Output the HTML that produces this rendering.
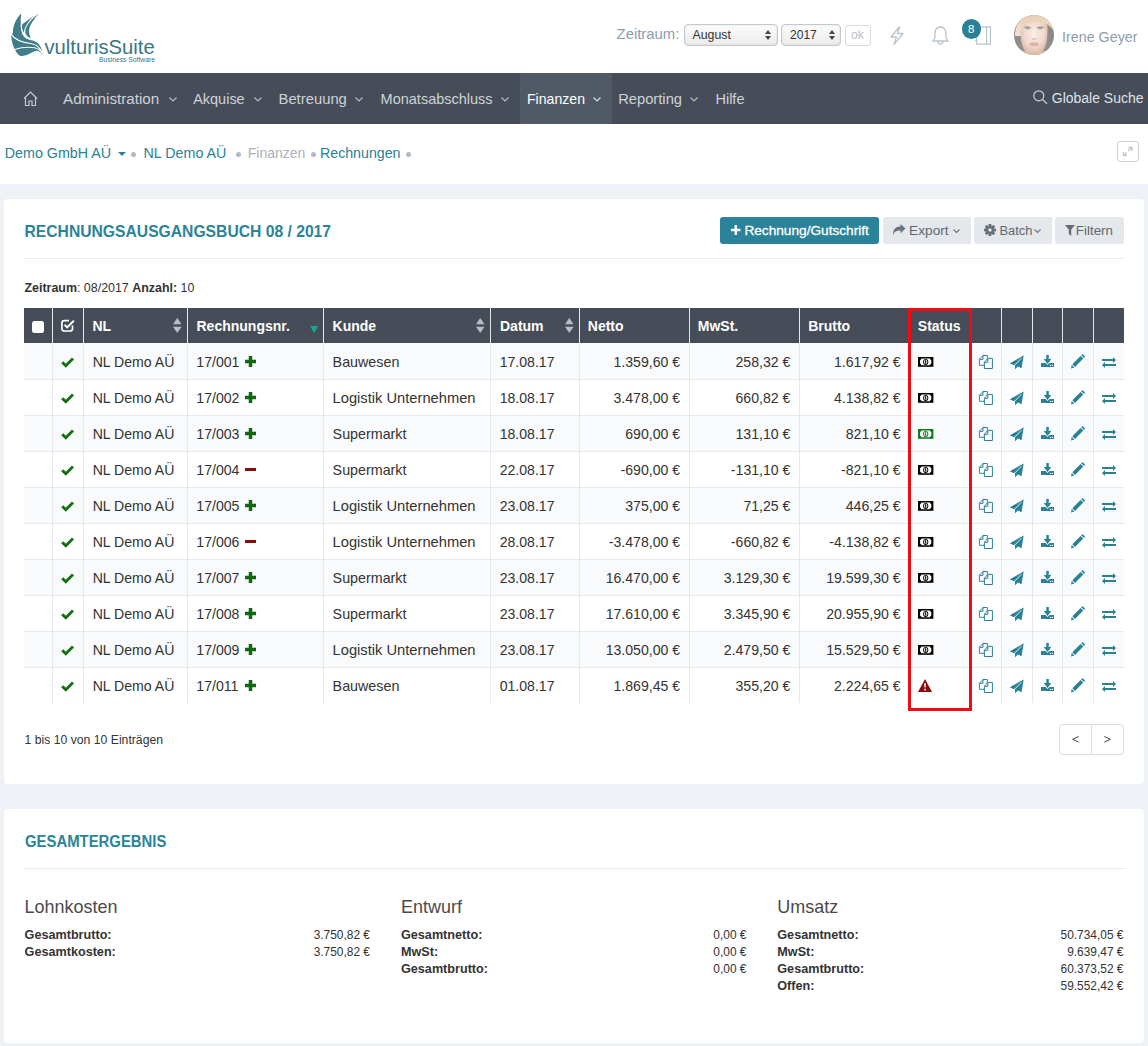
<!DOCTYPE html><html><head><meta charset="utf-8"><style>
*{box-sizing:border-box;margin:0;padding:0}
html,body{width:1148px;height:1046px;overflow:hidden}
body{background:#eef2f6;font-family:"Liberation Sans",sans-serif;position:relative;color:#333}
.t{position:absolute;white-space:nowrap}
.abs{position:absolute}
svg{position:absolute;overflow:visible}
</style></head><body>
<div class="abs" style="left:0px;top:0px;width:1148px;height:73px;background:#fff"></div>
<div class="abs" style="left:0px;top:124px;width:1148px;height:60px;background:#fff"></div>
<div class="abs" style="left:0px;top:73px;width:1148px;height:51px;background:#464d58"></div>
<div class="abs" style="left:520px;top:73px;width:92px;height:51px;background:#505a66"></div>
<svg style="left:8px;top:10px;" width="40" height="50" viewBox="0 0 837 1046">
<path fill="#417c89" d="M280,70 C170,170 95,350 105,480 L65,510 C70,700 150,900 260,960 C400,970 520,860 600,850 C660,860 700,900 720,930 C720,800 650,680 520,640 C420,620 300,600 280,420 C265,300 260,150 280,70 Z"/>
<path fill="#417c89" d="M645,68 C520,170 380,300 362,430 C352,520 420,590 495,608 C440,540 425,440 462,340 C505,235 590,140 645,68 Z"/>
<path fill="#417c89" d="M545,122 C450,190 335,265 285,320 C292,400 305,450 330,485 C335,380 410,250 545,122 Z"/>
<path fill="none" stroke="#fff" stroke-width="24" d="M65,505 C150,640 300,680 480,700 C600,720 680,800 715,900"/>
<path fill="none" stroke="#fff" stroke-width="22" d="M125,830 C250,790 420,770 560,790 C640,810 690,860 705,900"/>
<path fill="none" stroke="#fff" stroke-width="22" d="M270,320 C280,450 330,560 500,605"/>
</svg>
<div class="t" style="left:44.40px;top:36px;font-size:20.25px;line-height:22px;color:#3a7583;font-weight:normal;">vulturisSuite</div>
<div class="t" style="left:99.00px;top:56px;font-size:6.76px;line-height:7px;color:#3a7583;font-weight:normal;">Business Software</div>
<div class="t" style="left:616.60px;top:26px;font-size:14.87px;line-height:16px;color:#8d9cae;font-weight:normal;">Zeitraum:</div>
<div class="abs" style="left:684px;top:24px;width:94px;height:22px;border:1px solid #c4c7cb;border-radius:4px;background:linear-gradient(#fcfcfc,#ebebeb);box-shadow:inset 0 0 2px rgba(0,0,0,.12)"></div>
<div class="abs" style="left:781px;top:24px;width:60px;height:22px;border:1px solid #c4c7cb;border-radius:4px;background:linear-gradient(#fcfcfc,#ebebeb);box-shadow:inset 0 0 2px rgba(0,0,0,.12)"></div>
<div class="t" style="left:692.50px;top:28px;font-size:12.33px;line-height:14px;color:#333;font-weight:normal;">August</div>
<div class="t" style="left:790.10px;top:28px;font-size:12.00px;line-height:14px;color:#333;font-weight:normal;">2017</div>
<svg style="left:765px;top:29.5px;" width="6" height="10" viewBox="0 0 6 10"><path fill="#444" d="M0,4 L3,0 L6,4 Z M0,6 L3,10 L6,6 Z"/></svg>
<svg style="left:828.5px;top:29.5px;" width="6" height="10" viewBox="0 0 6 10"><path fill="#444" d="M0,4 L3,0 L6,4 Z M0,6 L3,10 L6,6 Z"/></svg>
<div class="abs" style="left:845px;top:25px;width:26px;height:21px;border:1px solid #d3dbe0;border-radius:3px;background:#fff"></div>
<div class="t" style="left:851.00px;top:28px;font-size:12.12px;line-height:14px;color:#b5c1c9;font-weight:normal;">ok</div>
<svg style="left:890px;top:26px;" width="14" height="19" viewBox="0 0 14 19"><path fill="none" stroke="#b9c3cc" stroke-width="1.3" stroke-linejoin="round" d="M9.5,0.7 L1,11 L6.5,11 L4,18.3 L13,7.5 L7.5,7.5 Z"/></svg>
<svg style="left:932px;top:26px;" width="17" height="19" viewBox="0 0 17 19"><path fill="none" stroke="#b9c3cc" stroke-width="1.3" d="M8.5,1 C4.5,1 3,4 3,8 L3,12 L1,15 L16,15 L14,12 L14,8 C14,4 12.5,1 8.5,1 Z M6,15.5 C6.3,17.5 7.3,18.2 8.5,18.2 C9.7,18.2 10.7,17.5 11,15.5"/></svg>
<svg style="left:975px;top:26px;" width="17" height="19" viewBox="0 0 17 19"><path fill="none" stroke="#b9c3cc" stroke-width="1.2" d="M1.6,0.8 L15.4,0.8 L15.4,18.2 L1.6,18.2 Z M11.6,0.8 L11.6,18.2 M0,14.5 L1.6,14.5"/></svg>
<div class="abs" style="left:961.7px;top:19.2px;width:19.4px;height:19.4px;background:#2a8196;border-radius:50%"></div>
<div class="t" style="left:967.60px;top:23px;font-size:11.50px;line-height:12px;color:#fff;font-weight:normal;width:7px;text-align:center">8</div>
<svg style="left:1014px;top:15px;" width="40" height="40" viewBox="0 0 40 40">
<defs><clipPath id="av"><circle cx="20" cy="20" r="20"/></clipPath>
<radialGradient id="sk" cx="0.5" cy="0.4" r="0.62"><stop offset="0" stop-color="#f9ebe3"/><stop offset="0.55" stop-color="#f2dbcf"/><stop offset="1" stop-color="#d9b7a3"/></radialGradient>
<linearGradient id="bgv" x1="0" x2="1"><stop offset="0" stop-color="#8a8986"/><stop offset="0.5" stop-color="#a4a29e"/><stop offset="1" stop-color="#868582"/></linearGradient>
<linearGradient id="hr" x1="0" y1="0" x2="0" y2="1"><stop offset="0" stop-color="#e6cfb2"/><stop offset="1" stop-color="#f3e4d2"/></linearGradient></defs>
<g clip-path="url(#av)">
<rect x="0" y="0" width="40" height="40" fill="url(#bgv)"/>
<path d="M7,5 C5.5,24 8,33 13,38 C16,40.5 24,40.5 27,38 C32,33 34.5,24 33,5 Z" fill="url(#sk)"/>
<path d="M0,40 L0,36 C4,36 9,35 13,37 L27,37 C31,35 36,36 40,36 L40,40 Z" fill="#dcbca8"/>
<path d="M1,21 C1,6 10,0 21,0 C32,0 39,6 39,15 C36,10 31,7 24,7.2 C17,7.4 11,8.5 8.5,11 C7,13 6.5,17 6.8,21 Z" fill="url(#hr)"/>
<path d="M10.5,12.6 Q13.6,11 16.8,12.8" fill="none" stroke="#7d6d66" stroke-width="0.9"/>
<path d="M23.2,12.8 Q26.4,11 29.5,12.6" fill="none" stroke="#7d6d66" stroke-width="0.9"/>
<ellipse cx="13.7" cy="13.4" rx="1.9" ry="0.9" fill="#8ea1ae"/>
<ellipse cx="26.3" cy="13.4" rx="1.9" ry="0.9" fill="#8ea1ae"/>
<path d="M19.2,14 L18.3,22.5 Q20,24.5 21.7,22.5 L20.8,14 Z" fill="#fbf1ec" opacity="0.8"/>
<path d="M17.8,23.6 Q20,25 22.2,23.6" fill="none" stroke="#caa090" stroke-width="0.8"/>
<ellipse cx="20" cy="29.2" rx="4.6" ry="1.9" fill="#dfaea5"/>
</g></svg>
<div class="t" style="left:1062.00px;top:29px;font-size:14.30px;line-height:16px;color:#8d9cae;font-weight:normal;">Irene Geyer</div>
<svg style="left:23px;top:91px;" width="15" height="16" viewBox="0 0 15 16"><path fill="none" stroke="#c4c9d0" stroke-width="1.2" d="M1,7.5 L7.5,1 L14,7.5 M2.5,6.5 L2.5,14.5 L6,14.5 L6,10 L9,10 L9,14.5 L12.5,14.5 L12.5,6.5"/></svg>
<div class="t" style="left:63.00px;top:90px;font-size:15.20px;line-height:17px;color:#cdd2d9;font-weight:normal;">Administration</div>
<svg style="left:169px;top:96.5px;" width="8" height="5" viewBox="0 0 8 5"><path fill="none" stroke="#b5bcc5" stroke-width="1.1" d="M0.5,0.5 L4,4 L7.5,0.5"/></svg>
<div class="t" style="left:193.20px;top:91px;font-size:14.48px;line-height:16px;color:#cdd2d9;font-weight:normal;">Akquise</div>
<svg style="left:253.8px;top:96.5px;" width="8" height="5" viewBox="0 0 8 5"><path fill="none" stroke="#b5bcc5" stroke-width="1.1" d="M0.5,0.5 L4,4 L7.5,0.5"/></svg>
<div class="t" style="left:278.50px;top:91px;font-size:14.82px;line-height:16px;color:#cdd2d9;font-weight:normal;">Betreuung</div>
<svg style="left:355.4px;top:96.5px;" width="8" height="5" viewBox="0 0 8 5"><path fill="none" stroke="#b5bcc5" stroke-width="1.1" d="M0.5,0.5 L4,4 L7.5,0.5"/></svg>
<div class="t" style="left:380.60px;top:91px;font-size:14.50px;line-height:16px;color:#cdd2d9;font-weight:normal;">Monatsabschluss</div>
<svg style="left:501.3px;top:96.5px;" width="8" height="5" viewBox="0 0 8 5"><path fill="none" stroke="#b5bcc5" stroke-width="1.1" d="M0.5,0.5 L4,4 L7.5,0.5"/></svg>
<div class="t" style="left:527.00px;top:91px;font-size:14.10px;line-height:16px;color:#ffffff;font-weight:normal;">Finanzen</div>
<svg style="left:593.2px;top:96.5px;" width="8" height="5" viewBox="0 0 8 5"><path fill="none" stroke="#dde1e6" stroke-width="1.1" d="M0.5,0.5 L4,4 L7.5,0.5"/></svg>
<div class="t" style="left:618.20px;top:91px;font-size:14.72px;line-height:16px;color:#cdd2d9;font-weight:normal;">Reporting</div>
<svg style="left:690.3px;top:96.5px;" width="8" height="5" viewBox="0 0 8 5"><path fill="none" stroke="#b5bcc5" stroke-width="1.1" d="M0.5,0.5 L4,4 L7.5,0.5"/></svg>
<div class="t" style="left:715.40px;top:91px;font-size:14.55px;line-height:16px;color:#cdd2d9;font-weight:normal;">Hilfe</div>
<svg style="left:1033px;top:90px;" width="15" height="14" viewBox="0 0 15 14"><circle cx="5.8" cy="5.8" r="5" fill="none" stroke="#c9ced5" stroke-width="1.2"/><path d="M9.5,9.5 L14,13.8" stroke="#c9ced5" stroke-width="1.3"/></svg>
<div class="t" style="left:1051.80px;top:90px;font-size:13.98px;line-height:16px;color:#dfe3e8;font-weight:normal;">Globale Suche</div>
<div class="t" style="left:4.80px;top:145px;font-size:14.29px;line-height:16px;color:#2a8196;font-weight:normal;">Demo GmbH AÜ</div>
<svg style="left:118px;top:152px;" width="8" height="4" viewBox="0 0 8 4"><path fill="#2a8196" d="M0,0 L8,0 L4,4 Z"/></svg>
<div class="abs" style="left:130.5px;top:152px;width:5px;height:5px;background:#b3bac4;border-radius:50%"></div>
<div class="abs" style="left:235.5px;top:152px;width:5px;height:5px;background:#b3bac4;border-radius:50%"></div>
<div class="abs" style="left:311.0px;top:152px;width:5px;height:5px;background:#b3bac4;border-radius:50%"></div>
<div class="abs" style="left:406.0px;top:152px;width:5px;height:5px;background:#b3bac4;border-radius:50%"></div>
<div class="t" style="left:143.50px;top:145px;font-size:14.30px;line-height:16px;color:#2a8196;font-weight:normal;">NL Demo AÜ</div>
<div class="t" style="left:247.80px;top:145px;font-size:14.00px;line-height:16px;color:#a9b1bc;font-weight:normal;">Finanzen</div>
<div class="t" style="left:320.00px;top:145px;font-size:14.20px;line-height:16px;color:#2a8196;font-weight:normal;">Rechnungen</div>
<div class="abs" style="left:1117px;top:141px;width:22px;height:21px;border:1px solid #cad2d7;border-radius:3px;background:#fff"></div>
<svg style="left:1122px;top:146px;" width="12" height="11" viewBox="0 0 12 11"><path fill="none" stroke="#bdc7cd" stroke-width="1.3" d="M1.5,9.5 L4.5,6.5 M6,5 L9.5,1.5 M1.5,6 L1.5,9.5 L5,9.5 M6.5,1.5 L10,1.5 L10,5"/></svg>
<div class="abs" style="left:4px;top:199px;width:1140px;height:585px;background:#fff;border-radius:4px"></div>
<div class="abs" style="left:4px;top:809px;width:1140px;height:234px;background:#fff;border-radius:4px"></div>
<div class="t" style="left:24.50px;top:223px;font-size:15.68px;line-height:17px;color:#2a849a;font-weight:bold;">RECHNUNGSAUSGANGSBUCH 08 / 2017</div>
<div class="abs" style="left:24px;top:258px;width:1100px;height:1px;background:#e9ecef"></div>
<div class="abs" style="left:720px;top:217px;width:159px;height:27px;background:#2a8399;border-radius:3px"></div>
<svg style="left:730.5px;top:225px;" width="9.5" height="10" viewBox="0 0 9.5 10"><path fill="#fff" d="M3.6,0 L5.9,0 L5.9,3.8 L9.5,3.8 L9.5,6.2 L5.9,6.2 L5.9,10 L3.6,10 L3.6,6.2 L0,6.2 L0,3.8 L3.6,3.8 Z"/></svg>
<div class="t" style="left:744.40px;top:223px;font-size:13.67px;line-height:15px;color:#fff;font-weight:normal;-webkit-text-stroke:0.3px #fff">Rechnung/Gutschrift</div>
<div class="abs" style="left:883px;top:217px;width:88px;height:27px;background:#e4e7eb;border-radius:3px 0 0 3px"></div>
<div class="abs" style="left:974px;top:217px;width:78px;height:27px;background:#e4e7eb;border-radius:3px 0 0 3px"></div>
<div class="abs" style="left:1055px;top:217px;width:69px;height:27px;background:#e4e7eb;border-radius:3px"></div>
<svg style="left:893px;top:223.5px;" width="12.5" height="12" viewBox="0 0 12.5 12"><path fill="#6b737c" d="M12.5,4.6 L7.6,0 L7.6,2.6 C3,2.6 0,5 0,11 C1.3,7.5 3.5,6.4 7.6,6.4 L7.6,9.2 Z"/></svg>
<div class="t" style="left:909.10px;top:223px;font-size:13.70px;line-height:15px;color:#5f6771;font-weight:normal;">Export</div>
<svg style="left:952.8px;top:228.5px;" width="7" height="4" viewBox="0 0 7 4"><path fill="none" stroke="#6b737c" stroke-width="1.1" d="M0.5,0.5 L3.5,3.5 L6.5,0.5"/></svg>
<svg style="left:984px;top:224px;" width="12" height="12" viewBox="0 0 12 12"><g fill="#656d76"><circle cx="6" cy="6" r="3.8"/><rect x="4.6" y="0" width="2.8" height="12" rx="0.6" transform="rotate(0 6 6)"/><rect x="4.6" y="0" width="2.8" height="12" rx="0.6" transform="rotate(45 6 6)"/><rect x="4.6" y="0" width="2.8" height="12" rx="0.6" transform="rotate(90 6 6)"/><rect x="4.6" y="0" width="2.8" height="12" rx="0.6" transform="rotate(135 6 6)"/></g><circle cx="6" cy="6" r="1.7" fill="#e4e7eb"/></svg>
<div class="t" style="left:999.40px;top:223px;font-size:12.91px;line-height:15px;color:#5f6771;font-weight:normal;">Batch</div>
<svg style="left:1033.5px;top:228.5px;" width="7" height="4" viewBox="0 0 7 4"><path fill="none" stroke="#6b737c" stroke-width="1.1" d="M0.5,0.5 L3.5,3.5 L6.5,0.5"/></svg>
<svg style="left:1065px;top:225px;" width="10" height="11" viewBox="0 0 10 11"><path fill="#656d76" d="M0,0 L10,0 L6.2,4.6 L6.2,11 L3.8,9 L3.8,4.6 Z"/></svg>
<div class="t" style="left:1075.80px;top:223px;font-size:13.39px;line-height:15px;color:#5f6771;font-weight:normal;">Filtern</div>
<div class="t" style="left:24.5px;top:279.59px;font-size:12.43px;line-height:16px;color:#333"><b>Zeitraum</b>: 08/2017 <b>Anzahl:</b> 10</div>
<div class="abs" style="left:24px;top:308px;width:1100px;height:35px;background:#464d58"></div>
<div class="abs" style="left:24px;top:343px;width:1100px;height:36px;background:#f9fafc"></div>
<div class="abs" style="left:24px;top:379px;width:1100px;height:1px;background:#e5e9ed"></div>
<div class="abs" style="left:24px;top:380px;width:1100px;height:35px;background:#ffffff"></div>
<div class="abs" style="left:24px;top:415px;width:1100px;height:1px;background:#e5e9ed"></div>
<div class="abs" style="left:24px;top:416px;width:1100px;height:35px;background:#f9fafc"></div>
<div class="abs" style="left:24px;top:451px;width:1100px;height:1px;background:#e5e9ed"></div>
<div class="abs" style="left:24px;top:452px;width:1100px;height:35px;background:#ffffff"></div>
<div class="abs" style="left:24px;top:487px;width:1100px;height:1px;background:#e5e9ed"></div>
<div class="abs" style="left:24px;top:488px;width:1100px;height:35px;background:#f9fafc"></div>
<div class="abs" style="left:24px;top:523px;width:1100px;height:1px;background:#e5e9ed"></div>
<div class="abs" style="left:24px;top:524px;width:1100px;height:35px;background:#ffffff"></div>
<div class="abs" style="left:24px;top:559px;width:1100px;height:1px;background:#e5e9ed"></div>
<div class="abs" style="left:24px;top:560px;width:1100px;height:35px;background:#f9fafc"></div>
<div class="abs" style="left:24px;top:595px;width:1100px;height:1px;background:#e5e9ed"></div>
<div class="abs" style="left:24px;top:596px;width:1100px;height:35px;background:#ffffff"></div>
<div class="abs" style="left:24px;top:631px;width:1100px;height:1px;background:#e5e9ed"></div>
<div class="abs" style="left:24px;top:632px;width:1100px;height:35px;background:#f9fafc"></div>
<div class="abs" style="left:24px;top:667px;width:1100px;height:1px;background:#e5e9ed"></div>
<div class="abs" style="left:24px;top:668px;width:1100px;height:35px;background:#ffffff"></div>
<div class="abs" style="left:52px;top:308px;width:1px;height:395px;background:#e5e9ed"></div>
<div class="abs" style="left:83px;top:308px;width:1px;height:395px;background:#e5e9ed"></div>
<div class="abs" style="left:187px;top:308px;width:1px;height:395px;background:#e5e9ed"></div>
<div class="abs" style="left:323px;top:308px;width:1px;height:395px;background:#e5e9ed"></div>
<div class="abs" style="left:490px;top:308px;width:1px;height:395px;background:#e5e9ed"></div>
<div class="abs" style="left:579px;top:308px;width:1px;height:395px;background:#e5e9ed"></div>
<div class="abs" style="left:689px;top:308px;width:1px;height:395px;background:#e5e9ed"></div>
<div class="abs" style="left:799px;top:308px;width:1px;height:395px;background:#e5e9ed"></div>
<div class="abs" style="left:908px;top:308px;width:1px;height:395px;background:#e5e9ed"></div>
<div class="abs" style="left:971px;top:308px;width:1px;height:395px;background:#e5e9ed"></div>
<div class="abs" style="left:1001px;top:308px;width:1px;height:395px;background:#e5e9ed"></div>
<div class="abs" style="left:1032px;top:308px;width:1px;height:395px;background:#e5e9ed"></div>
<div class="abs" style="left:1062px;top:308px;width:1px;height:395px;background:#e5e9ed"></div>
<div class="abs" style="left:1093px;top:308px;width:1px;height:395px;background:#e5e9ed"></div>
<div class="abs" style="left:32px;top:321px;width:12px;height:11.5px;background:#fff;border-radius:2.5px"></div>
<svg style="left:61px;top:319px;" width="14" height="13" viewBox="0 0 14 13"><path fill="none" stroke="#fff" stroke-width="1.7" d="M11.5,6.5 L11.5,9.5 C11.5,11 10.5,12 9,12 L3.3,12 C1.8,12 0.9,11 0.9,9.5 L0.9,4 C0.9,2.5 1.8,1.6 3.3,1.6 L8,1.6"/><path fill="none" stroke="#fff" stroke-width="2" d="M3.6,5.8 L6.2,8.4 L12.8,1.8"/></svg>
<div class="t" style="left:92.40px;top:318px;font-size:14.00px;line-height:16px;color:#ffffff;font-weight:bold;">NL</div>
<div class="t" style="left:196.50px;top:318px;font-size:14.00px;line-height:16px;color:#ffffff;font-weight:bold;">Rechnungsnr.</div>
<div class="t" style="left:332.60px;top:318px;font-size:14.00px;line-height:16px;color:#ffffff;font-weight:bold;">Kunde</div>
<div class="t" style="left:500.00px;top:318px;font-size:14.00px;line-height:16px;color:#ffffff;font-weight:bold;">Datum</div>
<div class="t" style="left:587.80px;top:318px;font-size:14.00px;line-height:16px;color:#ffffff;font-weight:bold;">Netto</div>
<div class="t" style="left:697.80px;top:318px;font-size:14.00px;line-height:16px;color:#ffffff;font-weight:bold;">MwSt.</div>
<div class="t" style="left:808.20px;top:318px;font-size:14.00px;line-height:16px;color:#ffffff;font-weight:bold;">Brutto</div>
<div class="t" style="left:917.80px;top:318px;font-size:14.00px;line-height:16px;color:#ffffff;font-weight:bold;">Status</div>
<svg style="left:173.2px;top:318px;" width="8.5" height="15" viewBox="0 0 8.5 15"><path fill="#b9bec5" d="M4.25,0 L8.5,6.2 L0,6.2 Z M0,8.8 L8.5,8.8 L4.25,15 Z"/></svg>
<svg style="left:476.2px;top:318.2px;" width="8.5" height="15" viewBox="0 0 8.5 15"><path fill="#b9bec5" d="M4.25,0 L8.5,6.2 L0,6.2 Z M0,8.8 L8.5,8.8 L4.25,15 Z"/></svg>
<svg style="left:565.4px;top:318px;" width="8.5" height="15" viewBox="0 0 8.5 15"><path fill="#b9bec5" d="M4.25,0 L8.5,6.2 L0,6.2 Z M0,8.8 L8.5,8.8 L4.25,15 Z"/></svg>
<svg style="left:309.7px;top:326px;" width="8.2" height="7" viewBox="0 0 8.2 7"><path fill="#1aa39a" d="M0,0 L8.2,0 L4.1,7 Z"/></svg>
<svg style="left:61px;top:357.7px;" width="13" height="9.5" viewBox="0 0 13 9.5"><path fill="#127012" d="M0,5 L2,3 L4.6,5.6 L10.8,-0.6 L12.8,1.4 L4.6,9.6 Z" transform="translate(0.2,0.2)"/></svg>
<div class="t" style="left:92.70px;top:354px;font-size:14.10px;line-height:16px;color:#333333;font-weight:normal;">NL Demo AÜ</div>
<div class="t" style="left:196.30px;top:354px;font-size:14.10px;line-height:16px;color:#333333;font-weight:normal;">17/001</div>
<svg style="left:244.8px;top:356px;" width="11" height="11" viewBox="0 0 11 11"><path fill="#0f6a0f" d="M3.75,0 L7.25,0 L7.25,3.75 L11,3.75 L11,7.25 L7.25,7.25 L7.25,11 L3.75,11 L3.75,7.25 L0,7.25 L0,3.75 L3.75,3.75 Z"/></svg>
<div class="t" style="left:332.60px;top:354px;font-size:14.30px;line-height:16px;color:#333333;font-weight:normal;">Bauwesen</div>
<div class="t" style="left:499.70px;top:354px;font-size:14.10px;line-height:16px;color:#333333;font-weight:normal;">17.08.17</div>
<div class="t" style="right:467.90px;top:354px;font-size:14.10px;line-height:16px;color:#333333;font-weight:normal;">1.359,60 €</div>
<div class="t" style="right:357.60px;top:354px;font-size:14.10px;line-height:16px;color:#333333;font-weight:normal;">258,32 €</div>
<div class="t" style="right:247.40px;top:354px;font-size:14.10px;line-height:16px;color:#333333;font-weight:normal;">1.617,92 €</div>
<svg style="left:917.6px;top:357px;" width="15.4" height="9.8" viewBox="0 0 15.4 9.8"><rect x="0" y="0" width="15.4" height="9.8" fill="#000"/><path fill="#fff" d="M3.4,1.6 L12,1.6 C12.2,2.6 12.6,3 13.3,3.1 L13.3,6.7 C12.6,6.8 12.2,7.2 12,8.2 L3.4,8.2 C3.2,7.2 2.8,6.8 2.1,6.7 L2.1,3.1 C2.8,3 3.2,2.6 3.4,1.6 Z"/><ellipse cx="7.7" cy="4.9" rx="2.6" ry="3" fill="#000"/><ellipse cx="7.7" cy="4.9" rx="1.7" ry="2.1" fill="#fff"/><path fill="#000" d="M7.1,3.3 L8.2,3.3 L8.2,6.5 L7.1,6.5 Z"/></svg>
<svg style="left:975px;top:355px;" width="18" height="14" viewBox="0 0 18 14"><g fill="none" stroke="#2a8196" stroke-width="1" stroke-linejoin="round"><path d="M8,0.5 L12.3,0.5 L12.3,3.5 M4.4,4.3 L4.4,10.3 L9.3,10.3 M8,0.5 L4.4,4.3 L8,4.3 Z"/><path d="M12.8,3.4 L17.4,3.4 L17.4,13.5 L9.4,13.5 L9.4,7.3 Z M12.8,3.4 L12.8,7.3 L9.4,7.3"/></g></svg>
<svg style="left:1009px;top:354.5px;" width="15" height="14.5" viewBox="0 0 15 14.5"><path fill="#2a8196" d="M0.79,8.2 L14.69,0.53 L12.53,13.23 L9,11.5 L6.06,14.19 L5.9,10.1 L3.67,9.87 Z"/><path stroke="#fff" stroke-width="0.85" d="M12.4,3.2 L5.7,10.1"/></svg>
<svg style="left:1041px;top:355px;" width="13" height="12" viewBox="0 0 13 12"><path fill="#2a8196" d="M5.3,0 L7.8,0 L7.8,4.1 L10.4,4.1 L6.55,8.9 L2.7,4.1 L5.3,4.1 Z M0,8 L4.6,8 L6.55,9.9 L8.5,8 L13,8 L13,12 L0,12 Z"/><circle cx="9.6" cy="10.4" r="0.7" fill="#fff"/><circle cx="11.5" cy="10.4" r="0.7" fill="#fff"/></svg>
<svg style="left:1071px;top:354px;" width="14.4" height="14.4" viewBox="0 0 14.4 14.4"><path fill="#2a8196" d="M11.5,0 L14.2,2.7 L13,3.9 L10.3,1.2 Z M9.6,1.9 L12.3,4.6 L4,12.9 L1.3,10.2 Z M0.7,10.9 L3.3,13.5 L0,14.4 Z"/></svg>
<svg style="left:1102px;top:357px;" width="14" height="11" viewBox="0 0 14 11"><path fill="#2a8196" d="M0,2 L11,2 L11,0 L14,3 L11,6 L11,4 L0,4 Z M14,7.1 L3,7.1 L3,5 L0,8 L3,11 L3,9.1 L14,9.1 Z"/></svg>
<svg style="left:61px;top:393.7px;" width="13" height="9.5" viewBox="0 0 13 9.5"><path fill="#127012" d="M0,5 L2,3 L4.6,5.6 L10.8,-0.6 L12.8,1.4 L4.6,9.6 Z" transform="translate(0.2,0.2)"/></svg>
<div class="t" style="left:92.70px;top:390px;font-size:14.10px;line-height:16px;color:#333333;font-weight:normal;">NL Demo AÜ</div>
<div class="t" style="left:196.30px;top:390px;font-size:14.10px;line-height:16px;color:#333333;font-weight:normal;">17/002</div>
<svg style="left:244.8px;top:392px;" width="11" height="11" viewBox="0 0 11 11"><path fill="#0f6a0f" d="M3.75,0 L7.25,0 L7.25,3.75 L11,3.75 L11,7.25 L7.25,7.25 L7.25,11 L3.75,11 L3.75,7.25 L0,7.25 L0,3.75 L3.75,3.75 Z"/></svg>
<div class="t" style="left:332.60px;top:390px;font-size:14.70px;line-height:16px;color:#333333;font-weight:normal;">Logistik Unternehmen</div>
<div class="t" style="left:499.70px;top:390px;font-size:14.10px;line-height:16px;color:#333333;font-weight:normal;">18.08.17</div>
<div class="t" style="right:467.90px;top:390px;font-size:14.10px;line-height:16px;color:#333333;font-weight:normal;">3.478,00 €</div>
<div class="t" style="right:357.60px;top:390px;font-size:14.10px;line-height:16px;color:#333333;font-weight:normal;">660,82 €</div>
<div class="t" style="right:247.40px;top:390px;font-size:14.10px;line-height:16px;color:#333333;font-weight:normal;">4.138,82 €</div>
<svg style="left:917.6px;top:393px;" width="15.4" height="9.8" viewBox="0 0 15.4 9.8"><rect x="0" y="0" width="15.4" height="9.8" fill="#000"/><path fill="#fff" d="M3.4,1.6 L12,1.6 C12.2,2.6 12.6,3 13.3,3.1 L13.3,6.7 C12.6,6.8 12.2,7.2 12,8.2 L3.4,8.2 C3.2,7.2 2.8,6.8 2.1,6.7 L2.1,3.1 C2.8,3 3.2,2.6 3.4,1.6 Z"/><ellipse cx="7.7" cy="4.9" rx="2.6" ry="3" fill="#000"/><ellipse cx="7.7" cy="4.9" rx="1.7" ry="2.1" fill="#fff"/><path fill="#000" d="M7.1,3.3 L8.2,3.3 L8.2,6.5 L7.1,6.5 Z"/></svg>
<svg style="left:975px;top:391px;" width="18" height="14" viewBox="0 0 18 14"><g fill="none" stroke="#2a8196" stroke-width="1" stroke-linejoin="round"><path d="M8,0.5 L12.3,0.5 L12.3,3.5 M4.4,4.3 L4.4,10.3 L9.3,10.3 M8,0.5 L4.4,4.3 L8,4.3 Z"/><path d="M12.8,3.4 L17.4,3.4 L17.4,13.5 L9.4,13.5 L9.4,7.3 Z M12.8,3.4 L12.8,7.3 L9.4,7.3"/></g></svg>
<svg style="left:1009px;top:390.5px;" width="15" height="14.5" viewBox="0 0 15 14.5"><path fill="#2a8196" d="M0.79,8.2 L14.69,0.53 L12.53,13.23 L9,11.5 L6.06,14.19 L5.9,10.1 L3.67,9.87 Z"/><path stroke="#fff" stroke-width="0.85" d="M12.4,3.2 L5.7,10.1"/></svg>
<svg style="left:1041px;top:391px;" width="13" height="12" viewBox="0 0 13 12"><path fill="#2a8196" d="M5.3,0 L7.8,0 L7.8,4.1 L10.4,4.1 L6.55,8.9 L2.7,4.1 L5.3,4.1 Z M0,8 L4.6,8 L6.55,9.9 L8.5,8 L13,8 L13,12 L0,12 Z"/><circle cx="9.6" cy="10.4" r="0.7" fill="#fff"/><circle cx="11.5" cy="10.4" r="0.7" fill="#fff"/></svg>
<svg style="left:1071px;top:390px;" width="14.4" height="14.4" viewBox="0 0 14.4 14.4"><path fill="#2a8196" d="M11.5,0 L14.2,2.7 L13,3.9 L10.3,1.2 Z M9.6,1.9 L12.3,4.6 L4,12.9 L1.3,10.2 Z M0.7,10.9 L3.3,13.5 L0,14.4 Z"/></svg>
<svg style="left:1102px;top:393px;" width="14" height="11" viewBox="0 0 14 11"><path fill="#2a8196" d="M0,2 L11,2 L11,0 L14,3 L11,6 L11,4 L0,4 Z M14,7.1 L3,7.1 L3,5 L0,8 L3,11 L3,9.1 L14,9.1 Z"/></svg>
<svg style="left:61px;top:429.7px;" width="13" height="9.5" viewBox="0 0 13 9.5"><path fill="#127012" d="M0,5 L2,3 L4.6,5.6 L10.8,-0.6 L12.8,1.4 L4.6,9.6 Z" transform="translate(0.2,0.2)"/></svg>
<div class="t" style="left:92.70px;top:426px;font-size:14.10px;line-height:16px;color:#333333;font-weight:normal;">NL Demo AÜ</div>
<div class="t" style="left:196.30px;top:426px;font-size:14.10px;line-height:16px;color:#333333;font-weight:normal;">17/003</div>
<svg style="left:244.8px;top:428px;" width="11" height="11" viewBox="0 0 11 11"><path fill="#0f6a0f" d="M3.75,0 L7.25,0 L7.25,3.75 L11,3.75 L11,7.25 L7.25,7.25 L7.25,11 L3.75,11 L3.75,7.25 L0,7.25 L0,3.75 L3.75,3.75 Z"/></svg>
<div class="t" style="left:332.60px;top:426px;font-size:14.30px;line-height:16px;color:#333333;font-weight:normal;">Supermarkt</div>
<div class="t" style="left:499.70px;top:426px;font-size:14.10px;line-height:16px;color:#333333;font-weight:normal;">18.08.17</div>
<div class="t" style="right:467.90px;top:426px;font-size:14.10px;line-height:16px;color:#333333;font-weight:normal;">690,00 €</div>
<div class="t" style="right:357.60px;top:426px;font-size:14.10px;line-height:16px;color:#333333;font-weight:normal;">131,10 €</div>
<div class="t" style="right:247.40px;top:426px;font-size:14.10px;line-height:16px;color:#333333;font-weight:normal;">821,10 €</div>
<svg style="left:917.6px;top:429px;" width="15.4" height="9.8" viewBox="0 0 15.4 9.8"><rect x="0" y="0" width="15.4" height="9.8" fill="#0e7a1a"/><path fill="#fff" d="M3.4,1.6 L12,1.6 C12.2,2.6 12.6,3 13.3,3.1 L13.3,6.7 C12.6,6.8 12.2,7.2 12,8.2 L3.4,8.2 C3.2,7.2 2.8,6.8 2.1,6.7 L2.1,3.1 C2.8,3 3.2,2.6 3.4,1.6 Z"/><ellipse cx="7.7" cy="4.9" rx="2.6" ry="3" fill="#0e7a1a"/><ellipse cx="7.7" cy="4.9" rx="1.7" ry="2.1" fill="#fff"/><path fill="#0e7a1a" d="M7.1,3.3 L8.2,3.3 L8.2,6.5 L7.1,6.5 Z"/></svg>
<svg style="left:975px;top:427px;" width="18" height="14" viewBox="0 0 18 14"><g fill="none" stroke="#2a8196" stroke-width="1" stroke-linejoin="round"><path d="M8,0.5 L12.3,0.5 L12.3,3.5 M4.4,4.3 L4.4,10.3 L9.3,10.3 M8,0.5 L4.4,4.3 L8,4.3 Z"/><path d="M12.8,3.4 L17.4,3.4 L17.4,13.5 L9.4,13.5 L9.4,7.3 Z M12.8,3.4 L12.8,7.3 L9.4,7.3"/></g></svg>
<svg style="left:1009px;top:426.5px;" width="15" height="14.5" viewBox="0 0 15 14.5"><path fill="#2a8196" d="M0.79,8.2 L14.69,0.53 L12.53,13.23 L9,11.5 L6.06,14.19 L5.9,10.1 L3.67,9.87 Z"/><path stroke="#fff" stroke-width="0.85" d="M12.4,3.2 L5.7,10.1"/></svg>
<svg style="left:1041px;top:427px;" width="13" height="12" viewBox="0 0 13 12"><path fill="#2a8196" d="M5.3,0 L7.8,0 L7.8,4.1 L10.4,4.1 L6.55,8.9 L2.7,4.1 L5.3,4.1 Z M0,8 L4.6,8 L6.55,9.9 L8.5,8 L13,8 L13,12 L0,12 Z"/><circle cx="9.6" cy="10.4" r="0.7" fill="#fff"/><circle cx="11.5" cy="10.4" r="0.7" fill="#fff"/></svg>
<svg style="left:1071px;top:426px;" width="14.4" height="14.4" viewBox="0 0 14.4 14.4"><path fill="#2a8196" d="M11.5,0 L14.2,2.7 L13,3.9 L10.3,1.2 Z M9.6,1.9 L12.3,4.6 L4,12.9 L1.3,10.2 Z M0.7,10.9 L3.3,13.5 L0,14.4 Z"/></svg>
<svg style="left:1102px;top:429px;" width="14" height="11" viewBox="0 0 14 11"><path fill="#2a8196" d="M0,2 L11,2 L11,0 L14,3 L11,6 L11,4 L0,4 Z M14,7.1 L3,7.1 L3,5 L0,8 L3,11 L3,9.1 L14,9.1 Z"/></svg>
<svg style="left:61px;top:465.7px;" width="13" height="9.5" viewBox="0 0 13 9.5"><path fill="#127012" d="M0,5 L2,3 L4.6,5.6 L10.8,-0.6 L12.8,1.4 L4.6,9.6 Z" transform="translate(0.2,0.2)"/></svg>
<div class="t" style="left:92.70px;top:462px;font-size:14.10px;line-height:16px;color:#333333;font-weight:normal;">NL Demo AÜ</div>
<div class="t" style="left:196.30px;top:462px;font-size:14.10px;line-height:16px;color:#333333;font-weight:normal;">17/004</div>
<div class="abs" style="left:244.8px;top:467.6px;width:11px;height:3.8px;background:#8a0c0c"></div>
<div class="t" style="left:332.60px;top:462px;font-size:14.30px;line-height:16px;color:#333333;font-weight:normal;">Supermarkt</div>
<div class="t" style="left:499.70px;top:462px;font-size:14.10px;line-height:16px;color:#333333;font-weight:normal;">22.08.17</div>
<div class="t" style="right:467.90px;top:462px;font-size:14.10px;line-height:16px;color:#333333;font-weight:normal;">-690,00 €</div>
<div class="t" style="right:357.60px;top:462px;font-size:14.10px;line-height:16px;color:#333333;font-weight:normal;">-131,10 €</div>
<div class="t" style="right:247.40px;top:462px;font-size:14.10px;line-height:16px;color:#333333;font-weight:normal;">-821,10 €</div>
<svg style="left:917.6px;top:465px;" width="15.4" height="9.8" viewBox="0 0 15.4 9.8"><rect x="0" y="0" width="15.4" height="9.8" fill="#000"/><path fill="#fff" d="M3.4,1.6 L12,1.6 C12.2,2.6 12.6,3 13.3,3.1 L13.3,6.7 C12.6,6.8 12.2,7.2 12,8.2 L3.4,8.2 C3.2,7.2 2.8,6.8 2.1,6.7 L2.1,3.1 C2.8,3 3.2,2.6 3.4,1.6 Z"/><ellipse cx="7.7" cy="4.9" rx="2.6" ry="3" fill="#000"/><ellipse cx="7.7" cy="4.9" rx="1.7" ry="2.1" fill="#fff"/><path fill="#000" d="M7.1,3.3 L8.2,3.3 L8.2,6.5 L7.1,6.5 Z"/></svg>
<svg style="left:975px;top:463px;" width="18" height="14" viewBox="0 0 18 14"><g fill="none" stroke="#2a8196" stroke-width="1" stroke-linejoin="round"><path d="M8,0.5 L12.3,0.5 L12.3,3.5 M4.4,4.3 L4.4,10.3 L9.3,10.3 M8,0.5 L4.4,4.3 L8,4.3 Z"/><path d="M12.8,3.4 L17.4,3.4 L17.4,13.5 L9.4,13.5 L9.4,7.3 Z M12.8,3.4 L12.8,7.3 L9.4,7.3"/></g></svg>
<svg style="left:1009px;top:462.5px;" width="15" height="14.5" viewBox="0 0 15 14.5"><path fill="#2a8196" d="M0.79,8.2 L14.69,0.53 L12.53,13.23 L9,11.5 L6.06,14.19 L5.9,10.1 L3.67,9.87 Z"/><path stroke="#fff" stroke-width="0.85" d="M12.4,3.2 L5.7,10.1"/></svg>
<svg style="left:1041px;top:463px;" width="13" height="12" viewBox="0 0 13 12"><path fill="#2a8196" d="M5.3,0 L7.8,0 L7.8,4.1 L10.4,4.1 L6.55,8.9 L2.7,4.1 L5.3,4.1 Z M0,8 L4.6,8 L6.55,9.9 L8.5,8 L13,8 L13,12 L0,12 Z"/><circle cx="9.6" cy="10.4" r="0.7" fill="#fff"/><circle cx="11.5" cy="10.4" r="0.7" fill="#fff"/></svg>
<svg style="left:1071px;top:462px;" width="14.4" height="14.4" viewBox="0 0 14.4 14.4"><path fill="#2a8196" d="M11.5,0 L14.2,2.7 L13,3.9 L10.3,1.2 Z M9.6,1.9 L12.3,4.6 L4,12.9 L1.3,10.2 Z M0.7,10.9 L3.3,13.5 L0,14.4 Z"/></svg>
<svg style="left:1102px;top:465px;" width="14" height="11" viewBox="0 0 14 11"><path fill="#2a8196" d="M0,2 L11,2 L11,0 L14,3 L11,6 L11,4 L0,4 Z M14,7.1 L3,7.1 L3,5 L0,8 L3,11 L3,9.1 L14,9.1 Z"/></svg>
<svg style="left:61px;top:501.7px;" width="13" height="9.5" viewBox="0 0 13 9.5"><path fill="#127012" d="M0,5 L2,3 L4.6,5.6 L10.8,-0.6 L12.8,1.4 L4.6,9.6 Z" transform="translate(0.2,0.2)"/></svg>
<div class="t" style="left:92.70px;top:498px;font-size:14.10px;line-height:16px;color:#333333;font-weight:normal;">NL Demo AÜ</div>
<div class="t" style="left:196.30px;top:498px;font-size:14.10px;line-height:16px;color:#333333;font-weight:normal;">17/005</div>
<svg style="left:244.8px;top:500px;" width="11" height="11" viewBox="0 0 11 11"><path fill="#0f6a0f" d="M3.75,0 L7.25,0 L7.25,3.75 L11,3.75 L11,7.25 L7.25,7.25 L7.25,11 L3.75,11 L3.75,7.25 L0,7.25 L0,3.75 L3.75,3.75 Z"/></svg>
<div class="t" style="left:332.60px;top:498px;font-size:14.70px;line-height:16px;color:#333333;font-weight:normal;">Logistik Unternehmen</div>
<div class="t" style="left:499.70px;top:498px;font-size:14.10px;line-height:16px;color:#333333;font-weight:normal;">23.08.17</div>
<div class="t" style="right:467.90px;top:498px;font-size:14.10px;line-height:16px;color:#333333;font-weight:normal;">375,00 €</div>
<div class="t" style="right:357.60px;top:498px;font-size:14.10px;line-height:16px;color:#333333;font-weight:normal;">71,25 €</div>
<div class="t" style="right:247.40px;top:498px;font-size:14.10px;line-height:16px;color:#333333;font-weight:normal;">446,25 €</div>
<svg style="left:917.6px;top:501px;" width="15.4" height="9.8" viewBox="0 0 15.4 9.8"><rect x="0" y="0" width="15.4" height="9.8" fill="#000"/><path fill="#fff" d="M3.4,1.6 L12,1.6 C12.2,2.6 12.6,3 13.3,3.1 L13.3,6.7 C12.6,6.8 12.2,7.2 12,8.2 L3.4,8.2 C3.2,7.2 2.8,6.8 2.1,6.7 L2.1,3.1 C2.8,3 3.2,2.6 3.4,1.6 Z"/><ellipse cx="7.7" cy="4.9" rx="2.6" ry="3" fill="#000"/><ellipse cx="7.7" cy="4.9" rx="1.7" ry="2.1" fill="#fff"/><path fill="#000" d="M7.1,3.3 L8.2,3.3 L8.2,6.5 L7.1,6.5 Z"/></svg>
<svg style="left:975px;top:499px;" width="18" height="14" viewBox="0 0 18 14"><g fill="none" stroke="#2a8196" stroke-width="1" stroke-linejoin="round"><path d="M8,0.5 L12.3,0.5 L12.3,3.5 M4.4,4.3 L4.4,10.3 L9.3,10.3 M8,0.5 L4.4,4.3 L8,4.3 Z"/><path d="M12.8,3.4 L17.4,3.4 L17.4,13.5 L9.4,13.5 L9.4,7.3 Z M12.8,3.4 L12.8,7.3 L9.4,7.3"/></g></svg>
<svg style="left:1009px;top:498.5px;" width="15" height="14.5" viewBox="0 0 15 14.5"><path fill="#2a8196" d="M0.79,8.2 L14.69,0.53 L12.53,13.23 L9,11.5 L6.06,14.19 L5.9,10.1 L3.67,9.87 Z"/><path stroke="#fff" stroke-width="0.85" d="M12.4,3.2 L5.7,10.1"/></svg>
<svg style="left:1041px;top:499px;" width="13" height="12" viewBox="0 0 13 12"><path fill="#2a8196" d="M5.3,0 L7.8,0 L7.8,4.1 L10.4,4.1 L6.55,8.9 L2.7,4.1 L5.3,4.1 Z M0,8 L4.6,8 L6.55,9.9 L8.5,8 L13,8 L13,12 L0,12 Z"/><circle cx="9.6" cy="10.4" r="0.7" fill="#fff"/><circle cx="11.5" cy="10.4" r="0.7" fill="#fff"/></svg>
<svg style="left:1071px;top:498px;" width="14.4" height="14.4" viewBox="0 0 14.4 14.4"><path fill="#2a8196" d="M11.5,0 L14.2,2.7 L13,3.9 L10.3,1.2 Z M9.6,1.9 L12.3,4.6 L4,12.9 L1.3,10.2 Z M0.7,10.9 L3.3,13.5 L0,14.4 Z"/></svg>
<svg style="left:1102px;top:501px;" width="14" height="11" viewBox="0 0 14 11"><path fill="#2a8196" d="M0,2 L11,2 L11,0 L14,3 L11,6 L11,4 L0,4 Z M14,7.1 L3,7.1 L3,5 L0,8 L3,11 L3,9.1 L14,9.1 Z"/></svg>
<svg style="left:61px;top:537.7px;" width="13" height="9.5" viewBox="0 0 13 9.5"><path fill="#127012" d="M0,5 L2,3 L4.6,5.6 L10.8,-0.6 L12.8,1.4 L4.6,9.6 Z" transform="translate(0.2,0.2)"/></svg>
<div class="t" style="left:92.70px;top:534px;font-size:14.10px;line-height:16px;color:#333333;font-weight:normal;">NL Demo AÜ</div>
<div class="t" style="left:196.30px;top:534px;font-size:14.10px;line-height:16px;color:#333333;font-weight:normal;">17/006</div>
<div class="abs" style="left:244.8px;top:539.6px;width:11px;height:3.8px;background:#8a0c0c"></div>
<div class="t" style="left:332.60px;top:534px;font-size:14.70px;line-height:16px;color:#333333;font-weight:normal;">Logistik Unternehmen</div>
<div class="t" style="left:499.70px;top:534px;font-size:14.10px;line-height:16px;color:#333333;font-weight:normal;">28.08.17</div>
<div class="t" style="right:467.90px;top:534px;font-size:14.10px;line-height:16px;color:#333333;font-weight:normal;">-3.478,00 €</div>
<div class="t" style="right:357.60px;top:534px;font-size:14.10px;line-height:16px;color:#333333;font-weight:normal;">-660,82 €</div>
<div class="t" style="right:247.40px;top:534px;font-size:14.10px;line-height:16px;color:#333333;font-weight:normal;">-4.138,82 €</div>
<svg style="left:917.6px;top:537px;" width="15.4" height="9.8" viewBox="0 0 15.4 9.8"><rect x="0" y="0" width="15.4" height="9.8" fill="#000"/><path fill="#fff" d="M3.4,1.6 L12,1.6 C12.2,2.6 12.6,3 13.3,3.1 L13.3,6.7 C12.6,6.8 12.2,7.2 12,8.2 L3.4,8.2 C3.2,7.2 2.8,6.8 2.1,6.7 L2.1,3.1 C2.8,3 3.2,2.6 3.4,1.6 Z"/><ellipse cx="7.7" cy="4.9" rx="2.6" ry="3" fill="#000"/><ellipse cx="7.7" cy="4.9" rx="1.7" ry="2.1" fill="#fff"/><path fill="#000" d="M7.1,3.3 L8.2,3.3 L8.2,6.5 L7.1,6.5 Z"/></svg>
<svg style="left:975px;top:535px;" width="18" height="14" viewBox="0 0 18 14"><g fill="none" stroke="#2a8196" stroke-width="1" stroke-linejoin="round"><path d="M8,0.5 L12.3,0.5 L12.3,3.5 M4.4,4.3 L4.4,10.3 L9.3,10.3 M8,0.5 L4.4,4.3 L8,4.3 Z"/><path d="M12.8,3.4 L17.4,3.4 L17.4,13.5 L9.4,13.5 L9.4,7.3 Z M12.8,3.4 L12.8,7.3 L9.4,7.3"/></g></svg>
<svg style="left:1009px;top:534.5px;" width="15" height="14.5" viewBox="0 0 15 14.5"><path fill="#2a8196" d="M0.79,8.2 L14.69,0.53 L12.53,13.23 L9,11.5 L6.06,14.19 L5.9,10.1 L3.67,9.87 Z"/><path stroke="#fff" stroke-width="0.85" d="M12.4,3.2 L5.7,10.1"/></svg>
<svg style="left:1041px;top:535px;" width="13" height="12" viewBox="0 0 13 12"><path fill="#2a8196" d="M5.3,0 L7.8,0 L7.8,4.1 L10.4,4.1 L6.55,8.9 L2.7,4.1 L5.3,4.1 Z M0,8 L4.6,8 L6.55,9.9 L8.5,8 L13,8 L13,12 L0,12 Z"/><circle cx="9.6" cy="10.4" r="0.7" fill="#fff"/><circle cx="11.5" cy="10.4" r="0.7" fill="#fff"/></svg>
<svg style="left:1071px;top:534px;" width="14.4" height="14.4" viewBox="0 0 14.4 14.4"><path fill="#2a8196" d="M11.5,0 L14.2,2.7 L13,3.9 L10.3,1.2 Z M9.6,1.9 L12.3,4.6 L4,12.9 L1.3,10.2 Z M0.7,10.9 L3.3,13.5 L0,14.4 Z"/></svg>
<svg style="left:1102px;top:537px;" width="14" height="11" viewBox="0 0 14 11"><path fill="#2a8196" d="M0,2 L11,2 L11,0 L14,3 L11,6 L11,4 L0,4 Z M14,7.1 L3,7.1 L3,5 L0,8 L3,11 L3,9.1 L14,9.1 Z"/></svg>
<svg style="left:61px;top:573.7px;" width="13" height="9.5" viewBox="0 0 13 9.5"><path fill="#127012" d="M0,5 L2,3 L4.6,5.6 L10.8,-0.6 L12.8,1.4 L4.6,9.6 Z" transform="translate(0.2,0.2)"/></svg>
<div class="t" style="left:92.70px;top:570px;font-size:14.10px;line-height:16px;color:#333333;font-weight:normal;">NL Demo AÜ</div>
<div class="t" style="left:196.30px;top:570px;font-size:14.10px;line-height:16px;color:#333333;font-weight:normal;">17/007</div>
<svg style="left:244.8px;top:572px;" width="11" height="11" viewBox="0 0 11 11"><path fill="#0f6a0f" d="M3.75,0 L7.25,0 L7.25,3.75 L11,3.75 L11,7.25 L7.25,7.25 L7.25,11 L3.75,11 L3.75,7.25 L0,7.25 L0,3.75 L3.75,3.75 Z"/></svg>
<div class="t" style="left:332.60px;top:570px;font-size:14.30px;line-height:16px;color:#333333;font-weight:normal;">Supermarkt</div>
<div class="t" style="left:499.70px;top:570px;font-size:14.10px;line-height:16px;color:#333333;font-weight:normal;">23.08.17</div>
<div class="t" style="right:467.90px;top:570px;font-size:14.10px;line-height:16px;color:#333333;font-weight:normal;">16.470,00 €</div>
<div class="t" style="right:357.60px;top:570px;font-size:14.10px;line-height:16px;color:#333333;font-weight:normal;">3.129,30 €</div>
<div class="t" style="right:247.40px;top:570px;font-size:14.10px;line-height:16px;color:#333333;font-weight:normal;">19.599,30 €</div>
<svg style="left:917.6px;top:573px;" width="15.4" height="9.8" viewBox="0 0 15.4 9.8"><rect x="0" y="0" width="15.4" height="9.8" fill="#000"/><path fill="#fff" d="M3.4,1.6 L12,1.6 C12.2,2.6 12.6,3 13.3,3.1 L13.3,6.7 C12.6,6.8 12.2,7.2 12,8.2 L3.4,8.2 C3.2,7.2 2.8,6.8 2.1,6.7 L2.1,3.1 C2.8,3 3.2,2.6 3.4,1.6 Z"/><ellipse cx="7.7" cy="4.9" rx="2.6" ry="3" fill="#000"/><ellipse cx="7.7" cy="4.9" rx="1.7" ry="2.1" fill="#fff"/><path fill="#000" d="M7.1,3.3 L8.2,3.3 L8.2,6.5 L7.1,6.5 Z"/></svg>
<svg style="left:975px;top:571px;" width="18" height="14" viewBox="0 0 18 14"><g fill="none" stroke="#2a8196" stroke-width="1" stroke-linejoin="round"><path d="M8,0.5 L12.3,0.5 L12.3,3.5 M4.4,4.3 L4.4,10.3 L9.3,10.3 M8,0.5 L4.4,4.3 L8,4.3 Z"/><path d="M12.8,3.4 L17.4,3.4 L17.4,13.5 L9.4,13.5 L9.4,7.3 Z M12.8,3.4 L12.8,7.3 L9.4,7.3"/></g></svg>
<svg style="left:1009px;top:570.5px;" width="15" height="14.5" viewBox="0 0 15 14.5"><path fill="#2a8196" d="M0.79,8.2 L14.69,0.53 L12.53,13.23 L9,11.5 L6.06,14.19 L5.9,10.1 L3.67,9.87 Z"/><path stroke="#fff" stroke-width="0.85" d="M12.4,3.2 L5.7,10.1"/></svg>
<svg style="left:1041px;top:571px;" width="13" height="12" viewBox="0 0 13 12"><path fill="#2a8196" d="M5.3,0 L7.8,0 L7.8,4.1 L10.4,4.1 L6.55,8.9 L2.7,4.1 L5.3,4.1 Z M0,8 L4.6,8 L6.55,9.9 L8.5,8 L13,8 L13,12 L0,12 Z"/><circle cx="9.6" cy="10.4" r="0.7" fill="#fff"/><circle cx="11.5" cy="10.4" r="0.7" fill="#fff"/></svg>
<svg style="left:1071px;top:570px;" width="14.4" height="14.4" viewBox="0 0 14.4 14.4"><path fill="#2a8196" d="M11.5,0 L14.2,2.7 L13,3.9 L10.3,1.2 Z M9.6,1.9 L12.3,4.6 L4,12.9 L1.3,10.2 Z M0.7,10.9 L3.3,13.5 L0,14.4 Z"/></svg>
<svg style="left:1102px;top:573px;" width="14" height="11" viewBox="0 0 14 11"><path fill="#2a8196" d="M0,2 L11,2 L11,0 L14,3 L11,6 L11,4 L0,4 Z M14,7.1 L3,7.1 L3,5 L0,8 L3,11 L3,9.1 L14,9.1 Z"/></svg>
<svg style="left:61px;top:609.7px;" width="13" height="9.5" viewBox="0 0 13 9.5"><path fill="#127012" d="M0,5 L2,3 L4.6,5.6 L10.8,-0.6 L12.8,1.4 L4.6,9.6 Z" transform="translate(0.2,0.2)"/></svg>
<div class="t" style="left:92.70px;top:606px;font-size:14.10px;line-height:16px;color:#333333;font-weight:normal;">NL Demo AÜ</div>
<div class="t" style="left:196.30px;top:606px;font-size:14.10px;line-height:16px;color:#333333;font-weight:normal;">17/008</div>
<svg style="left:244.8px;top:608px;" width="11" height="11" viewBox="0 0 11 11"><path fill="#0f6a0f" d="M3.75,0 L7.25,0 L7.25,3.75 L11,3.75 L11,7.25 L7.25,7.25 L7.25,11 L3.75,11 L3.75,7.25 L0,7.25 L0,3.75 L3.75,3.75 Z"/></svg>
<div class="t" style="left:332.60px;top:606px;font-size:14.30px;line-height:16px;color:#333333;font-weight:normal;">Supermarkt</div>
<div class="t" style="left:499.70px;top:606px;font-size:14.10px;line-height:16px;color:#333333;font-weight:normal;">23.08.17</div>
<div class="t" style="right:467.90px;top:606px;font-size:14.10px;line-height:16px;color:#333333;font-weight:normal;">17.610,00 €</div>
<div class="t" style="right:357.60px;top:606px;font-size:14.10px;line-height:16px;color:#333333;font-weight:normal;">3.345,90 €</div>
<div class="t" style="right:247.40px;top:606px;font-size:14.10px;line-height:16px;color:#333333;font-weight:normal;">20.955,90 €</div>
<svg style="left:917.6px;top:609px;" width="15.4" height="9.8" viewBox="0 0 15.4 9.8"><rect x="0" y="0" width="15.4" height="9.8" fill="#000"/><path fill="#fff" d="M3.4,1.6 L12,1.6 C12.2,2.6 12.6,3 13.3,3.1 L13.3,6.7 C12.6,6.8 12.2,7.2 12,8.2 L3.4,8.2 C3.2,7.2 2.8,6.8 2.1,6.7 L2.1,3.1 C2.8,3 3.2,2.6 3.4,1.6 Z"/><ellipse cx="7.7" cy="4.9" rx="2.6" ry="3" fill="#000"/><ellipse cx="7.7" cy="4.9" rx="1.7" ry="2.1" fill="#fff"/><path fill="#000" d="M7.1,3.3 L8.2,3.3 L8.2,6.5 L7.1,6.5 Z"/></svg>
<svg style="left:975px;top:607px;" width="18" height="14" viewBox="0 0 18 14"><g fill="none" stroke="#2a8196" stroke-width="1" stroke-linejoin="round"><path d="M8,0.5 L12.3,0.5 L12.3,3.5 M4.4,4.3 L4.4,10.3 L9.3,10.3 M8,0.5 L4.4,4.3 L8,4.3 Z"/><path d="M12.8,3.4 L17.4,3.4 L17.4,13.5 L9.4,13.5 L9.4,7.3 Z M12.8,3.4 L12.8,7.3 L9.4,7.3"/></g></svg>
<svg style="left:1009px;top:606.5px;" width="15" height="14.5" viewBox="0 0 15 14.5"><path fill="#2a8196" d="M0.79,8.2 L14.69,0.53 L12.53,13.23 L9,11.5 L6.06,14.19 L5.9,10.1 L3.67,9.87 Z"/><path stroke="#fff" stroke-width="0.85" d="M12.4,3.2 L5.7,10.1"/></svg>
<svg style="left:1041px;top:607px;" width="13" height="12" viewBox="0 0 13 12"><path fill="#2a8196" d="M5.3,0 L7.8,0 L7.8,4.1 L10.4,4.1 L6.55,8.9 L2.7,4.1 L5.3,4.1 Z M0,8 L4.6,8 L6.55,9.9 L8.5,8 L13,8 L13,12 L0,12 Z"/><circle cx="9.6" cy="10.4" r="0.7" fill="#fff"/><circle cx="11.5" cy="10.4" r="0.7" fill="#fff"/></svg>
<svg style="left:1071px;top:606px;" width="14.4" height="14.4" viewBox="0 0 14.4 14.4"><path fill="#2a8196" d="M11.5,0 L14.2,2.7 L13,3.9 L10.3,1.2 Z M9.6,1.9 L12.3,4.6 L4,12.9 L1.3,10.2 Z M0.7,10.9 L3.3,13.5 L0,14.4 Z"/></svg>
<svg style="left:1102px;top:609px;" width="14" height="11" viewBox="0 0 14 11"><path fill="#2a8196" d="M0,2 L11,2 L11,0 L14,3 L11,6 L11,4 L0,4 Z M14,7.1 L3,7.1 L3,5 L0,8 L3,11 L3,9.1 L14,9.1 Z"/></svg>
<svg style="left:61px;top:645.7px;" width="13" height="9.5" viewBox="0 0 13 9.5"><path fill="#127012" d="M0,5 L2,3 L4.6,5.6 L10.8,-0.6 L12.8,1.4 L4.6,9.6 Z" transform="translate(0.2,0.2)"/></svg>
<div class="t" style="left:92.70px;top:642px;font-size:14.10px;line-height:16px;color:#333333;font-weight:normal;">NL Demo AÜ</div>
<div class="t" style="left:196.30px;top:642px;font-size:14.10px;line-height:16px;color:#333333;font-weight:normal;">17/009</div>
<svg style="left:244.8px;top:644px;" width="11" height="11" viewBox="0 0 11 11"><path fill="#0f6a0f" d="M3.75,0 L7.25,0 L7.25,3.75 L11,3.75 L11,7.25 L7.25,7.25 L7.25,11 L3.75,11 L3.75,7.25 L0,7.25 L0,3.75 L3.75,3.75 Z"/></svg>
<div class="t" style="left:332.60px;top:642px;font-size:14.70px;line-height:16px;color:#333333;font-weight:normal;">Logistik Unternehmen</div>
<div class="t" style="left:499.70px;top:642px;font-size:14.10px;line-height:16px;color:#333333;font-weight:normal;">23.08.17</div>
<div class="t" style="right:467.90px;top:642px;font-size:14.10px;line-height:16px;color:#333333;font-weight:normal;">13.050,00 €</div>
<div class="t" style="right:357.60px;top:642px;font-size:14.10px;line-height:16px;color:#333333;font-weight:normal;">2.479,50 €</div>
<div class="t" style="right:247.40px;top:642px;font-size:14.10px;line-height:16px;color:#333333;font-weight:normal;">15.529,50 €</div>
<svg style="left:917.6px;top:645px;" width="15.4" height="9.8" viewBox="0 0 15.4 9.8"><rect x="0" y="0" width="15.4" height="9.8" fill="#000"/><path fill="#fff" d="M3.4,1.6 L12,1.6 C12.2,2.6 12.6,3 13.3,3.1 L13.3,6.7 C12.6,6.8 12.2,7.2 12,8.2 L3.4,8.2 C3.2,7.2 2.8,6.8 2.1,6.7 L2.1,3.1 C2.8,3 3.2,2.6 3.4,1.6 Z"/><ellipse cx="7.7" cy="4.9" rx="2.6" ry="3" fill="#000"/><ellipse cx="7.7" cy="4.9" rx="1.7" ry="2.1" fill="#fff"/><path fill="#000" d="M7.1,3.3 L8.2,3.3 L8.2,6.5 L7.1,6.5 Z"/></svg>
<svg style="left:975px;top:643px;" width="18" height="14" viewBox="0 0 18 14"><g fill="none" stroke="#2a8196" stroke-width="1" stroke-linejoin="round"><path d="M8,0.5 L12.3,0.5 L12.3,3.5 M4.4,4.3 L4.4,10.3 L9.3,10.3 M8,0.5 L4.4,4.3 L8,4.3 Z"/><path d="M12.8,3.4 L17.4,3.4 L17.4,13.5 L9.4,13.5 L9.4,7.3 Z M12.8,3.4 L12.8,7.3 L9.4,7.3"/></g></svg>
<svg style="left:1009px;top:642.5px;" width="15" height="14.5" viewBox="0 0 15 14.5"><path fill="#2a8196" d="M0.79,8.2 L14.69,0.53 L12.53,13.23 L9,11.5 L6.06,14.19 L5.9,10.1 L3.67,9.87 Z"/><path stroke="#fff" stroke-width="0.85" d="M12.4,3.2 L5.7,10.1"/></svg>
<svg style="left:1041px;top:643px;" width="13" height="12" viewBox="0 0 13 12"><path fill="#2a8196" d="M5.3,0 L7.8,0 L7.8,4.1 L10.4,4.1 L6.55,8.9 L2.7,4.1 L5.3,4.1 Z M0,8 L4.6,8 L6.55,9.9 L8.5,8 L13,8 L13,12 L0,12 Z"/><circle cx="9.6" cy="10.4" r="0.7" fill="#fff"/><circle cx="11.5" cy="10.4" r="0.7" fill="#fff"/></svg>
<svg style="left:1071px;top:642px;" width="14.4" height="14.4" viewBox="0 0 14.4 14.4"><path fill="#2a8196" d="M11.5,0 L14.2,2.7 L13,3.9 L10.3,1.2 Z M9.6,1.9 L12.3,4.6 L4,12.9 L1.3,10.2 Z M0.7,10.9 L3.3,13.5 L0,14.4 Z"/></svg>
<svg style="left:1102px;top:645px;" width="14" height="11" viewBox="0 0 14 11"><path fill="#2a8196" d="M0,2 L11,2 L11,0 L14,3 L11,6 L11,4 L0,4 Z M14,7.1 L3,7.1 L3,5 L0,8 L3,11 L3,9.1 L14,9.1 Z"/></svg>
<svg style="left:61px;top:681.7px;" width="13" height="9.5" viewBox="0 0 13 9.5"><path fill="#127012" d="M0,5 L2,3 L4.6,5.6 L10.8,-0.6 L12.8,1.4 L4.6,9.6 Z" transform="translate(0.2,0.2)"/></svg>
<div class="t" style="left:92.70px;top:678px;font-size:14.10px;line-height:16px;color:#333333;font-weight:normal;">NL Demo AÜ</div>
<div class="t" style="left:196.30px;top:678px;font-size:14.10px;line-height:16px;color:#333333;font-weight:normal;">17/011</div>
<svg style="left:244.8px;top:680px;" width="11" height="11" viewBox="0 0 11 11"><path fill="#0f6a0f" d="M3.75,0 L7.25,0 L7.25,3.75 L11,3.75 L11,7.25 L7.25,7.25 L7.25,11 L3.75,11 L3.75,7.25 L0,7.25 L0,3.75 L3.75,3.75 Z"/></svg>
<div class="t" style="left:332.60px;top:678px;font-size:14.30px;line-height:16px;color:#333333;font-weight:normal;">Bauwesen</div>
<div class="t" style="left:499.70px;top:678px;font-size:14.10px;line-height:16px;color:#333333;font-weight:normal;">01.08.17</div>
<div class="t" style="right:467.90px;top:678px;font-size:14.10px;line-height:16px;color:#333333;font-weight:normal;">1.869,45 €</div>
<div class="t" style="right:357.60px;top:678px;font-size:14.10px;line-height:16px;color:#333333;font-weight:normal;">355,20 €</div>
<div class="t" style="right:247.40px;top:678px;font-size:14.10px;line-height:16px;color:#333333;font-weight:normal;">2.224,65 €</div>
<svg style="left:918px;top:679px;" width="14" height="13" viewBox="0 0 14 13"><path fill="#8e0b0b" d="M7,0 L14,13 L0,13 Z"/><path fill="#fff" d="M6.1,4.2 L7.9,4.2 L7.6,8.6 L6.4,8.6 Z M6.2,9.8 L7.8,9.8 L7.8,11.4 L6.2,11.4 Z"/></svg>
<svg style="left:975px;top:679px;" width="18" height="14" viewBox="0 0 18 14"><g fill="none" stroke="#2a8196" stroke-width="1" stroke-linejoin="round"><path d="M8,0.5 L12.3,0.5 L12.3,3.5 M4.4,4.3 L4.4,10.3 L9.3,10.3 M8,0.5 L4.4,4.3 L8,4.3 Z"/><path d="M12.8,3.4 L17.4,3.4 L17.4,13.5 L9.4,13.5 L9.4,7.3 Z M12.8,3.4 L12.8,7.3 L9.4,7.3"/></g></svg>
<svg style="left:1009px;top:678.5px;" width="15" height="14.5" viewBox="0 0 15 14.5"><path fill="#2a8196" d="M0.79,8.2 L14.69,0.53 L12.53,13.23 L9,11.5 L6.06,14.19 L5.9,10.1 L3.67,9.87 Z"/><path stroke="#fff" stroke-width="0.85" d="M12.4,3.2 L5.7,10.1"/></svg>
<svg style="left:1041px;top:679px;" width="13" height="12" viewBox="0 0 13 12"><path fill="#2a8196" d="M5.3,0 L7.8,0 L7.8,4.1 L10.4,4.1 L6.55,8.9 L2.7,4.1 L5.3,4.1 Z M0,8 L4.6,8 L6.55,9.9 L8.5,8 L13,8 L13,12 L0,12 Z"/><circle cx="9.6" cy="10.4" r="0.7" fill="#fff"/><circle cx="11.5" cy="10.4" r="0.7" fill="#fff"/></svg>
<svg style="left:1071px;top:678px;" width="14.4" height="14.4" viewBox="0 0 14.4 14.4"><path fill="#2a8196" d="M11.5,0 L14.2,2.7 L13,3.9 L10.3,1.2 Z M9.6,1.9 L12.3,4.6 L4,12.9 L1.3,10.2 Z M0.7,10.9 L3.3,13.5 L0,14.4 Z"/></svg>
<svg style="left:1102px;top:681px;" width="14" height="11" viewBox="0 0 14 11"><path fill="#2a8196" d="M0,2 L11,2 L11,0 L14,3 L11,6 L11,4 L0,4 Z M14,7.1 L3,7.1 L3,5 L0,8 L3,11 L3,9.1 L14,9.1 Z"/></svg>
<div class="abs" style="left:908px;top:308px;width:64px;height:403px;border:3px solid #f00c12"></div>
<div class="t" style="left:24.60px;top:733px;font-size:12.21px;line-height:14px;color:#333;font-weight:normal;">1 bis 10 von 10 Einträgen</div>
<div class="abs" style="left:1059px;top:724px;width:65px;height:31px;border:1px solid #dcdcdc;border-radius:4px;background:#fff"></div>
<div class="abs" style="left:1091px;top:724px;width:1px;height:31px;background:#dcdcdc"></div>
<svg style="left:1072px;top:736px;" width="7" height="7" viewBox="0 0 7 7"><path fill="none" stroke="#444" stroke-width="1" d="M6.6,0.5 L0.6,3.3 L6.6,6.1"/></svg>
<svg style="left:1104px;top:736px;" width="7" height="7" viewBox="0 0 7 7"><path fill="none" stroke="#444" stroke-width="1" d="M0.4,0.5 L6.4,3.3 L0.4,6.1"/></svg>
<div class="t" style="left:24.60px;top:832px;font-size:16.80px;line-height:19px;color:#2a849a;font-weight:bold;transform:scaleX(0.887);transform-origin:0 0">GESAMTERGEBNIS</div>
<div class="abs" style="left:24px;top:868px;width:1100px;height:1px;background:#e9ecef"></div>
<div class="t" style="left:24.60px;top:897px;font-size:17.97px;line-height:20px;color:#4a4a4a;font-weight:normal;">Lohnkosten</div>
<div class="t" style="left:24.60px;top:928px;font-size:12.64px;line-height:14px;color:#333;font-weight:bold;">Gesamtbrutto:</div>
<div class="t" style="right:778.00px;top:928px;font-size:11.93px;line-height:14px;color:#333;font-weight:normal;">3.750,82 €</div>
<div class="t" style="left:24.60px;top:945px;font-size:12.64px;line-height:14px;color:#333;font-weight:bold;">Gesamtkosten:</div>
<div class="t" style="right:778.00px;top:945px;font-size:11.93px;line-height:14px;color:#333;font-weight:normal;">3.750,82 €</div>
<div class="t" style="left:401.00px;top:897px;font-size:17.97px;line-height:20px;color:#4a4a4a;font-weight:normal;">Entwurf</div>
<div class="t" style="left:401.00px;top:928px;font-size:12.64px;line-height:14px;color:#333;font-weight:bold;">Gesamtnetto:</div>
<div class="t" style="right:401.50px;top:928px;font-size:11.93px;line-height:14px;color:#333;font-weight:normal;">0,00 €</div>
<div class="t" style="left:401.00px;top:945px;font-size:12.64px;line-height:14px;color:#333;font-weight:bold;">MwSt:</div>
<div class="t" style="right:401.50px;top:945px;font-size:11.93px;line-height:14px;color:#333;font-weight:normal;">0,00 €</div>
<div class="t" style="left:401.00px;top:962px;font-size:12.64px;line-height:14px;color:#333;font-weight:bold;">Gesamtbrutto:</div>
<div class="t" style="right:401.50px;top:962px;font-size:11.93px;line-height:14px;color:#333;font-weight:normal;">0,00 €</div>
<div class="t" style="left:777.30px;top:897px;font-size:17.97px;line-height:20px;color:#4a4a4a;font-weight:normal;">Umsatz</div>
<div class="t" style="left:777.30px;top:928px;font-size:12.64px;line-height:14px;color:#333;font-weight:bold;">Gesamtnetto:</div>
<div class="t" style="right:24.50px;top:928px;font-size:11.93px;line-height:14px;color:#333;font-weight:normal;">50.734,05 €</div>
<div class="t" style="left:777.30px;top:945px;font-size:12.64px;line-height:14px;color:#333;font-weight:bold;">MwSt:</div>
<div class="t" style="right:24.50px;top:945px;font-size:11.93px;line-height:14px;color:#333;font-weight:normal;">9.639,47 €</div>
<div class="t" style="left:777.30px;top:962px;font-size:12.64px;line-height:14px;color:#333;font-weight:bold;">Gesamtbrutto:</div>
<div class="t" style="right:24.50px;top:962px;font-size:11.93px;line-height:14px;color:#333;font-weight:normal;">60.373,52 €</div>
<div class="t" style="left:777.30px;top:979px;font-size:12.64px;line-height:14px;color:#333;font-weight:bold;">Offen:</div>
<div class="t" style="right:24.50px;top:979px;font-size:11.93px;line-height:14px;color:#333;font-weight:normal;">59.552,42 €</div>
</body></html>
